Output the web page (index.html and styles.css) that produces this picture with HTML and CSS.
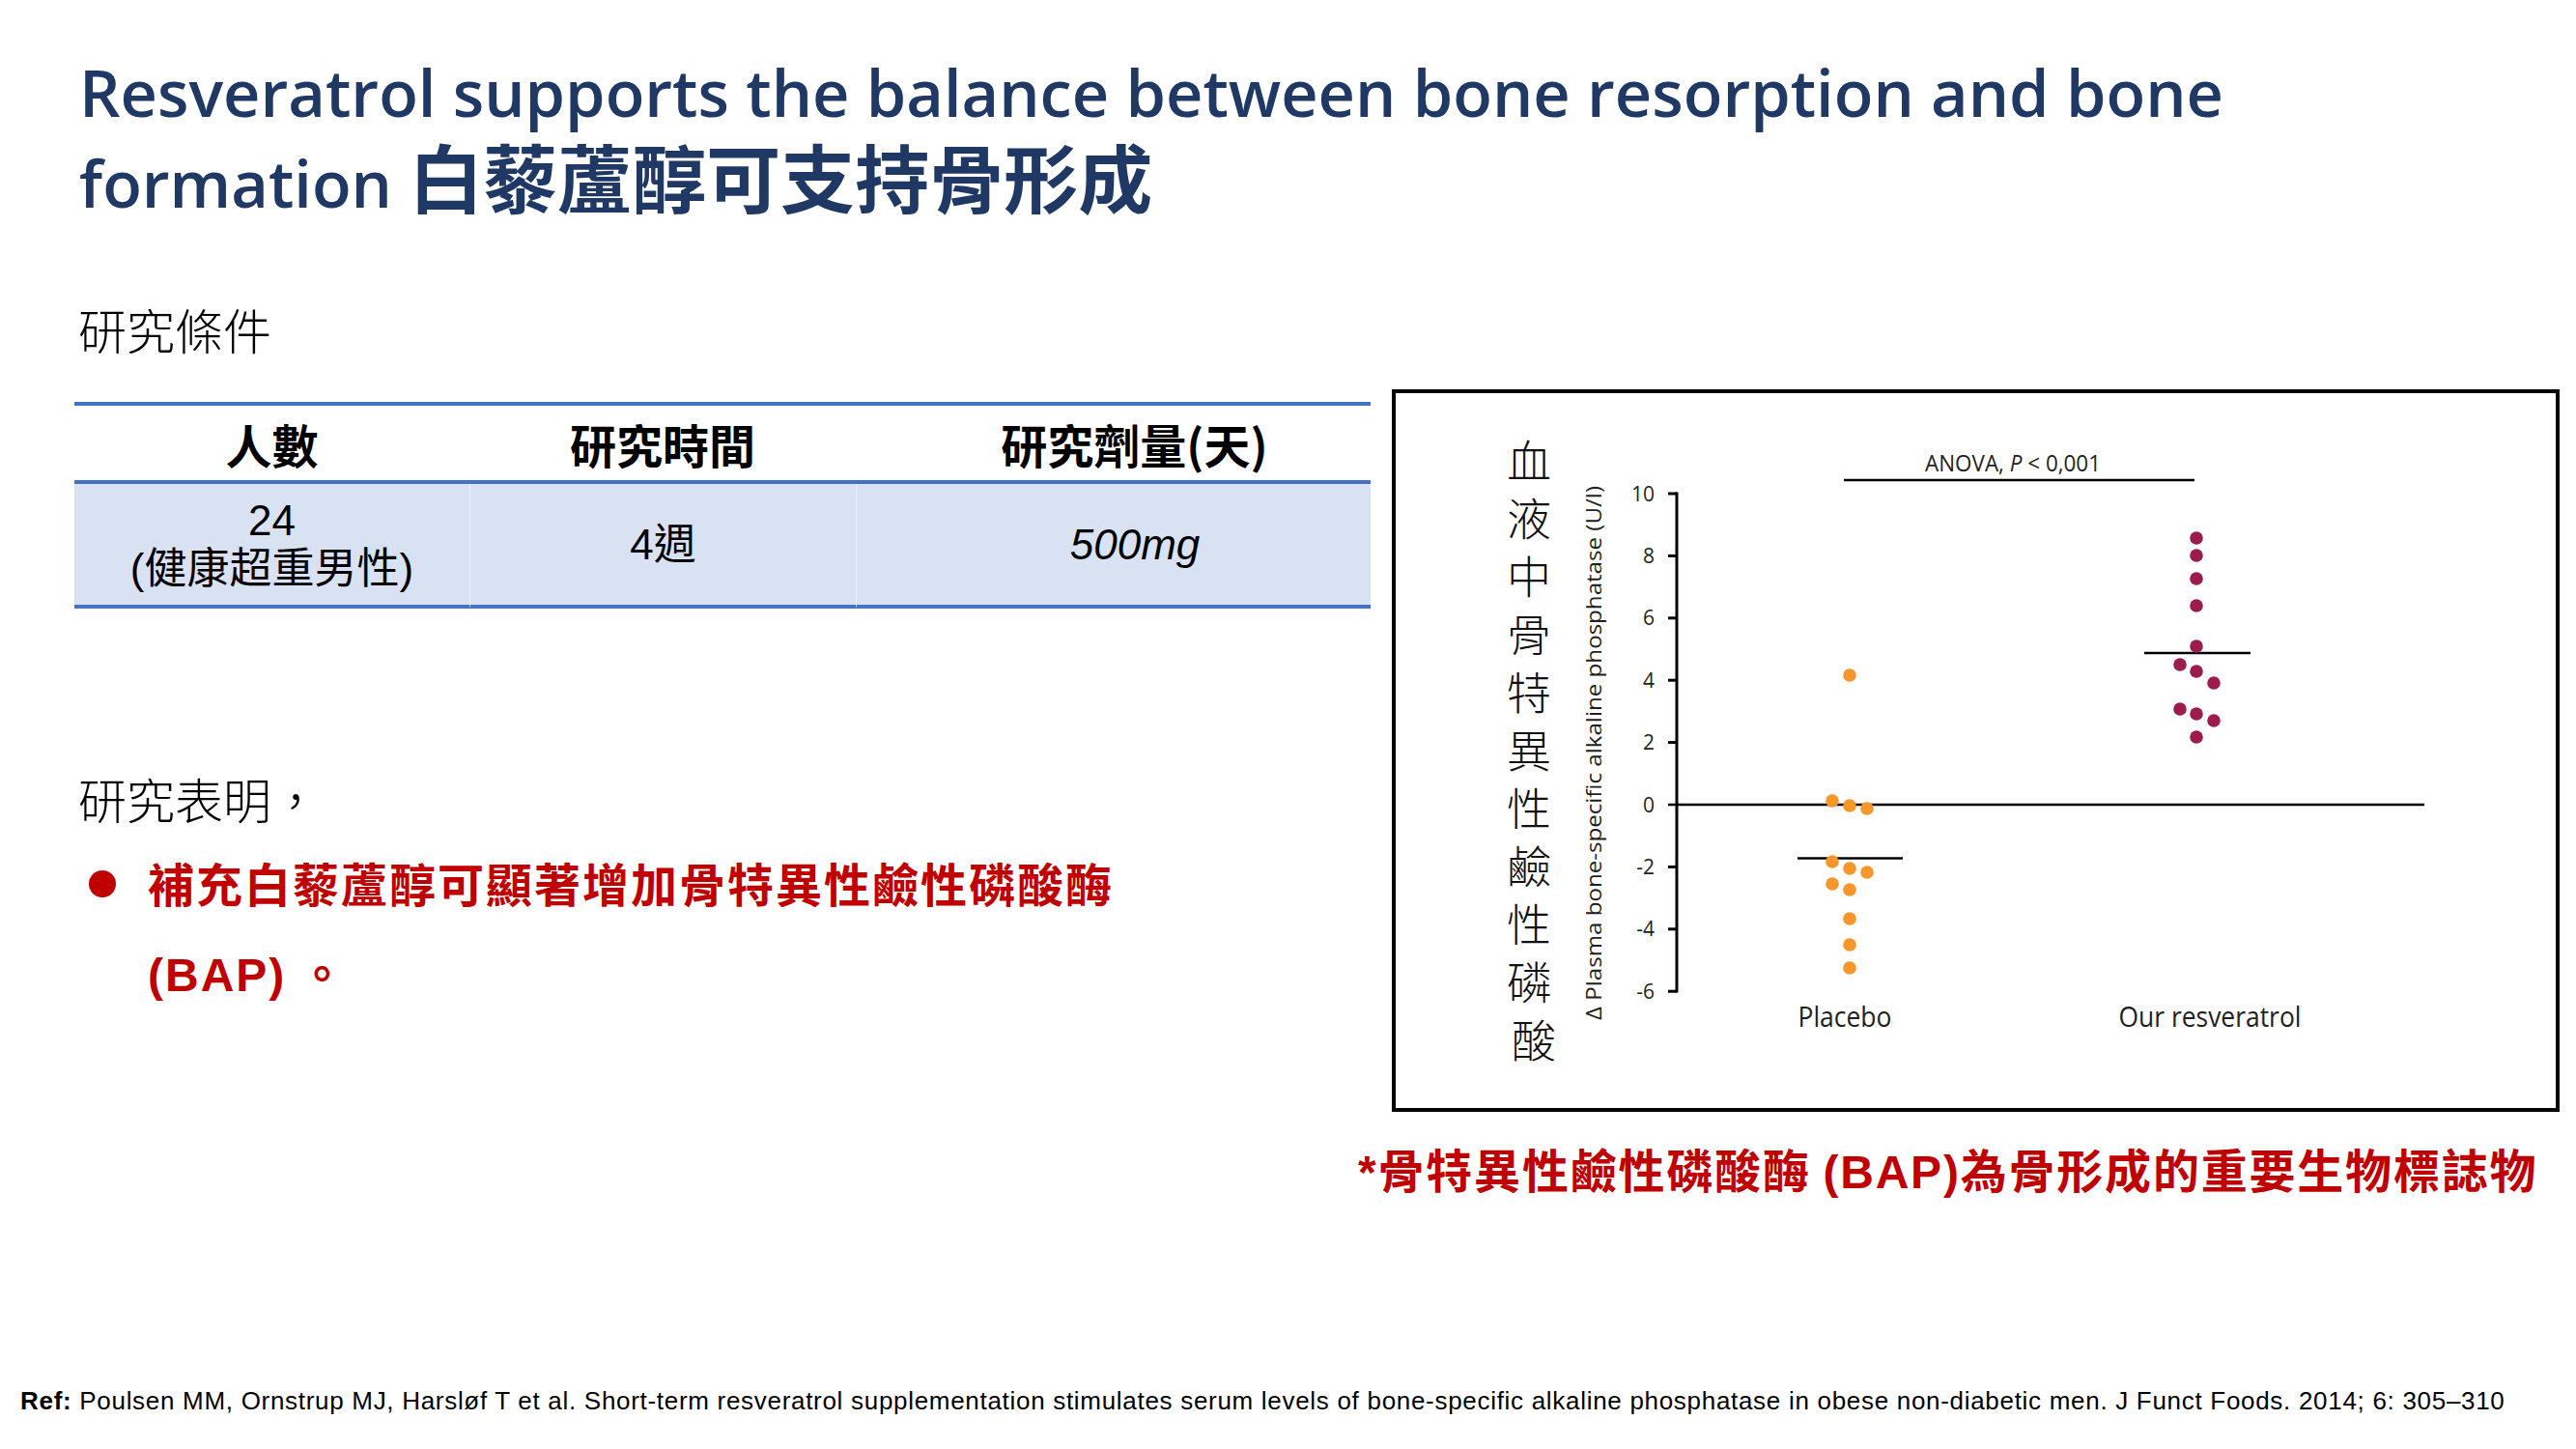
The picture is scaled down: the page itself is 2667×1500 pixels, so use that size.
FILE: index.html
```html
<!DOCTYPE html>
<html lang="zh-Hant">
<head>
<meta charset="utf-8">
<title>Resveratrol and bone formation</title>
<link rel="stylesheet" href="styles.css">
</head>
<body>
<div class="slide">
  <h1 class="title">Resveratrol supports the balance between bone resorption and bone<br>formation <span class="cjk">白藜蘆醇可支持骨形成</span></h1>

  <div class="content">
    <section class="left">
      <p class="label">研究條件</p>
      <table class="study">
        <colgroup><col class="c1"><col class="c2"><col class="c3"></colgroup>
        <thead>
          <tr>
            <th><div class="hcell">人數</div></th>
            <th><div class="hcell">研究時間</div></th>
            <th><div class="hcell shift">研究劑量(天)</div></th>
          </tr>
        </thead>
        <tbody>
          <tr>
            <td><div class="dcell"><span>24</span><span>(健康超重男性)</span></div></td>
            <td><div class="dcell">4週</div></td>
            <td><div class="dcell shift"><span class="dose">500mg</span></div></td>
          </tr>
        </tbody>
      </table>

      <p class="label findings">研究表明，</p>
      <ul class="bullets">
        <li><span class="dot"></span><span class="btext">補充白藜蘆醇可顯著增加骨特異性鹼性磷酸酶<br><span class="latin">(BAP)</span> 。</span></li>
      </ul>
    </section>

    <section class="right">
      <div class="chart">
        <svg class="plot" width="1201" height="740" viewBox="1445 407 1201 740">
          <text class="vlabel">
            <tspan x="1588" y="494">血</tspan>
            <tspan x="1588" y="554">液</tspan>
            <tspan x="1588" y="614">中</tspan>
            <tspan x="1588" y="674">骨</tspan>
            <tspan x="1588" y="734">特</tspan>
            <tspan x="1588" y="794">異</tspan>
            <tspan x="1588" y="854">性</tspan>
            <tspan x="1588" y="914">鹼</tspan>
            <tspan x="1588" y="974">性</tspan>
            <tspan x="1588" y="1034">磷</tspan>
            <tspan x="1588" y="1094">酸</tspan>
          </text>

          <text class="ylab" transform="translate(1658 1056) rotate(-90)" textLength="553" lengthAdjust="spacingAndGlyphs">Δ Plasma bone-specific alkaline phosphatase (U/l)</text>

          <g class="ticklabels">
            <text x="1713" y="518.5">10</text>
            <text x="1713" y="583">8</text>
            <text x="1713" y="647.3">6</text>
            <text x="1713" y="711.7">4</text>
            <text x="1713" y="776.1">2</text>
            <text x="1713" y="840.5">0</text>
            <text x="1713" y="904.9">-2</text>
            <text x="1713" y="969.3">-4</text>
            <text x="1713" y="1033.7">-6</text>
          </g>

          <g class="axis">
            <line x1="1736" y1="509.5" x2="1736" y2="1027.5"/>
            <line x1="1727" y1="511" x2="1736" y2="511"/>
            <line x1="1727" y1="575.4" x2="1736" y2="575.4"/>
            <line x1="1727" y1="639.8" x2="1736" y2="639.8"/>
            <line x1="1727" y1="704.2" x2="1736" y2="704.2"/>
            <line x1="1727" y1="768.6" x2="1736" y2="768.6"/>
            <line x1="1727" y1="897.4" x2="1736" y2="897.4"/>
            <line x1="1727" y1="961.8" x2="1736" y2="961.8"/>
            <line x1="1727" y1="1026.2" x2="1736" y2="1026.2"/>
            <line class="zero" x1="1727" y1="833" x2="2510" y2="833"/>
            <line class="thin" x1="1909" y1="497" x2="2272" y2="497"/>
            <line class="thin" x1="1861" y1="888.5" x2="1970" y2="888.5"/>
            <line class="thin" x1="2220" y1="676" x2="2330" y2="676"/>
          </g>

          <text class="anova" x="1993" y="488" textLength="182" lengthAdjust="spacingAndGlyphs">ANOVA, <tspan class="it">P</tspan> &lt; 0,001</text>

          <g class="placebo">
            <circle cx="1915" cy="699" r="6.8"/>
            <circle cx="1897" cy="829" r="6.8"/>
            <circle cx="1915" cy="834" r="6.8"/>
            <circle cx="1933" cy="837" r="6.8"/>
            <circle cx="1897" cy="892" r="6.8"/>
            <circle cx="1915" cy="899" r="6.8"/>
            <circle cx="1933" cy="903" r="6.8"/>
            <circle cx="1897" cy="915" r="6.8"/>
            <circle cx="1915" cy="921" r="6.8"/>
            <circle cx="1915" cy="951" r="6.8"/>
            <circle cx="1915" cy="978" r="6.8"/>
            <circle cx="1915" cy="1002" r="6.8"/>
          </g>

          <g class="resv">
            <circle cx="2274" cy="557" r="6.8"/>
            <circle cx="2274" cy="575" r="6.8"/>
            <circle cx="2274" cy="599" r="6.8"/>
            <circle cx="2274" cy="627" r="6.8"/>
            <circle cx="2274" cy="669" r="6.8"/>
            <circle cx="2257" cy="688" r="6.8"/>
            <circle cx="2274" cy="695" r="6.8"/>
            <circle cx="2292" cy="707" r="6.8"/>
            <circle cx="2257" cy="734" r="6.8"/>
            <circle cx="2274" cy="739" r="6.8"/>
            <circle cx="2292" cy="746" r="6.8"/>
            <circle cx="2274" cy="763" r="6.8"/>
          </g>

          <text class="cat" x="1910" y="1063" textLength="97" lengthAdjust="spacingAndGlyphs">Placebo</text>
          <text class="cat" x="2288" y="1063" textLength="189" lengthAdjust="spacingAndGlyphs">Our resveratrol</text>
        </svg>
      </div>
      <p class="footnote"><span class="latin">*</span>骨特異性鹼性磷酸酶 <span class="latin">(BAP)</span>為骨形成的重要生物標誌物</p>
    </section>
  </div>

  <p class="ref"><b>Ref:</b> Poulsen MM, Ornstrup MJ, Harsløf T et al. Short-term resveratrol supplementation stimulates serum levels of bone-specific alkaline phosphatase in obese non-diabetic men. J Funct Foods. 2014; 6: 305–310</p>
</div>
</body>
</html>
```

FILE: styles.css
```css
* { box-sizing: border-box; }

html, body {
  margin: 0;
  padding: 0;
  background: #ffffff;
}

body {
  width: 2667px;
  height: 1500px;
  overflow: hidden;
}

.slide {
  width: 2667px;
  height: 1500px;
  display: flex;
  flex-direction: column;
  font-family: "Noto Sans CJK TC", sans-serif;
  color: #000000;
}

.title {
  margin: 0;
  padding: 49px 0 0 82px;
  font-family: "Open Sans", "Noto Sans CJK TC", sans-serif;
  font-weight: 600;
  font-size: 66.7px;
  line-height: 94px;
  color: #1F3864;
  white-space: nowrap;
}

.title .cjk {
  font-family: "Noto Sans CJK TC", sans-serif;
  font-size: 77px;
  font-weight: 700;
  line-height: 1;
}

.content {
  display: flex;
  align-items: flex-start;
  margin-top: 73px;
}

.left {
  width: 1342px;
  margin-left: 77px;
  flex: none;
}

.right {
  margin-left: 22px;
  padding-top: 93px;
  flex: none;
}

.label {
  margin: 0 0 0 4px;
  font-size: 50px;
  font-weight: 300;
  line-height: 60px;
}

.study {
  margin-top: 46px;
  width: 1342px;
  table-layout: fixed;
  border-collapse: separate;
  border-spacing: 0;
}

.study .c1 { width: 409px; }
.study .c2 { width: 400px; }
.study .c3 { width: 533px; }

.study th {
  padding: 0;
  border-top: 4px solid #4472C4;
  border-bottom: 4px solid #4472C4;
  font-size: 48px;
  font-weight: 700;
}

.hcell {
  height: 77px;
  display: flex;
  align-items: center;
  justify-content: center;
  line-height: 60px;
}

.study td {
  padding: 0;
  background: #D9E2F3;
  border-bottom: 4px solid #4472C4;
  font-family: "Liberation Sans", "Noto Sans CJK TC", sans-serif;
  font-size: 44px;
}

.study td + td {
  border-left: 1px solid #E9EEF8;
}

.dcell {
  height: 125px;
  display: flex;
  flex-direction: column;
  align-items: center;
  justify-content: center;
  line-height: 50px;
}

.shift {
  padding-left: 44px;
}

.dose {
  font-style: italic;
}

.findings {
  margin-top: 166px;
}

.bullets {
  list-style: none;
  margin: 11px 0 0 15px;
  padding: 0;
}

.bullets li {
  display: flex;
  gap: 33px;
  font-size: 48px;
  font-weight: 700;
  letter-spacing: 2px;
  line-height: 92px;
  color: #C00000;
}

.dot {
  flex: none;
  width: 28px;
  height: 28px;
  margin-top: 34px;
  border-radius: 50%;
  background: #C00000;
}

.latin {
  font-family: "Liberation Sans", Arial, sans-serif;
}

.chart {
  width: 1209px;
  height: 748px;
  border: 4px solid #000000;
}

.plot {
  display: block;
}

.vlabel {
  font-family: "Noto Sans CJK TC", sans-serif;
  font-size: 46px;
  font-weight: 300;
  text-anchor: middle;
  fill: #111111;
}

.ylab {
  font-family: "Open Sans", sans-serif;
  font-size: 22px;
  fill: #231F20;
}

.ticklabels text {
  font-family: "Open Sans", sans-serif;
  font-size: 21px;
  text-anchor: end;
  fill: #231F20;
}

.axis line {
  stroke: #000000;
  stroke-width: 3;
}

.axis .zero {
  stroke-width: 2.6;
}

.axis .thin {
  stroke-width: 2.4;
}

.anova {
  font-family: "Open Sans", sans-serif;
  font-size: 24px;
  fill: #231F20;
}

.anova .it {
  font-style: italic;
}

.placebo circle {
  fill: #F7962B;
}

.resv circle {
  fill: #9D1C4E;
}

.cat {
  font-family: "Open Sans", sans-serif;
  font-size: 30px;
  text-anchor: middle;
  fill: #231F20;
}

.footnote {
  margin: 28px 0 0 -35px;
  font-size: 48px;
  font-weight: 700;
  letter-spacing: 1.8px;
  line-height: 60px;
  color: #C00000;
  white-space: nowrap;
}

.ref {
  margin: auto 0 35px 21px;
  font-family: "Liberation Sans", Arial, sans-serif;
  font-size: 26px;
  letter-spacing: 0.7px;
  line-height: 30px;
  white-space: nowrap;
  color: #000000;
}
```
